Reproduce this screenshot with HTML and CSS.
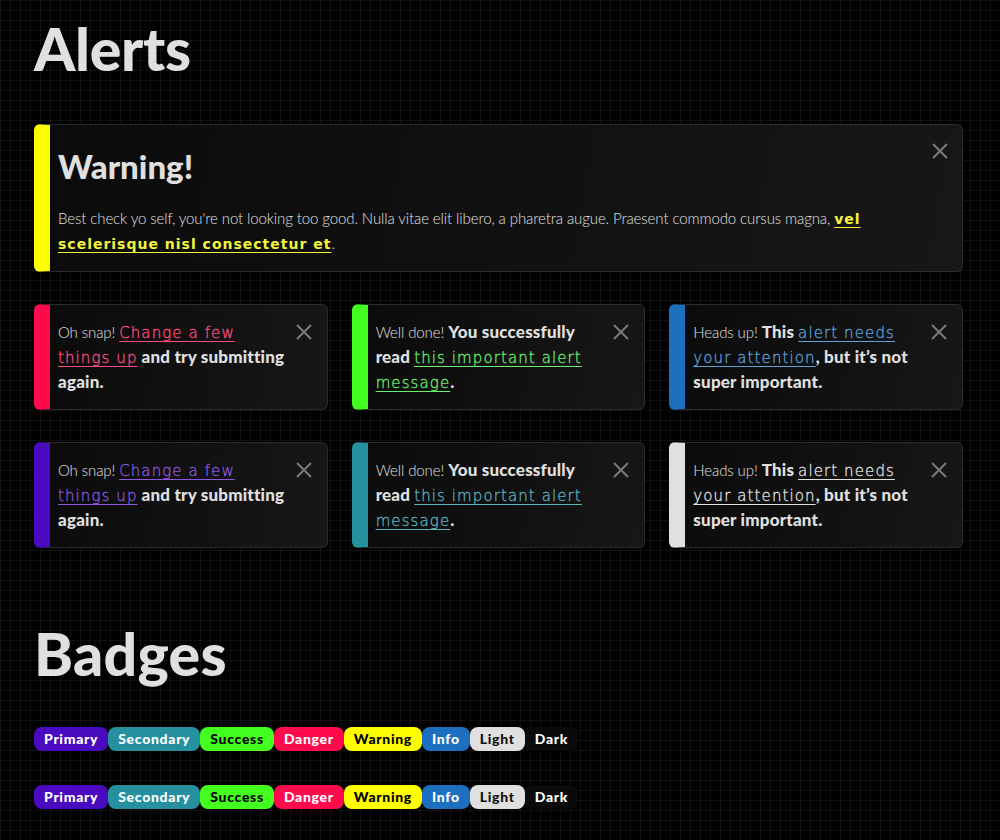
FILE: index.html
```html
<!DOCTYPE html>
<html lang="en">
<head>
    <meta charset="UTF-8">
    <meta name="viewport" content="width=device-width, initial-scale=1.0">
    <title>Alerts &amp; Badges</title>
    <link rel="stylesheet" href="styles.css">
</head>
<body>
    <div class="container">
        <h1 class="section-title">Alerts</h1>

        <div class="alert alert-warning">
            <div class="alert-body">
                <h4 class="alert-heading">Warning!</h4>
                <p>Best check yo self, you're not looking too good. Nulla vitae elit libero, a pharetra augue. Praesent commodo cursus magna, <a href="#" class="alert-link strong-link">vel scelerisque nisl consectetur et</a>.</p>
            </div>
            <button class="close" aria-label="Close">
                <svg viewBox="0 0 16 16"><path d="M1 1L15 15M15 1L1 15"/></svg>
            </button>
        </div>

        <div class="alert-grid">
            <div class="alert alert-danger">
                <div class="alert-body">Oh snap! <a href="#" class="alert-link">Change a few things up</a> <strong>and try submitting again.</strong></div>
                <button class="close" aria-label="Close"><svg viewBox="0 0 16 16"><path d="M1 1L15 15M15 1L1 15"/></svg></button>
            </div>
            <div class="alert alert-success">
                <div class="alert-body">Well done! <strong>You successfully read</strong> <a href="#" class="alert-link">this important alert message</a><strong>.</strong></div>
                <button class="close" aria-label="Close"><svg viewBox="0 0 16 16"><path d="M1 1L15 15M15 1L1 15"/></svg></button>
            </div>
            <div class="alert alert-info">
                <div class="alert-body">Heads up! <strong>This</strong> <a href="#" class="alert-link">alert needs your attention</a><strong>, but it’s not super important.</strong></div>
                <button class="close" aria-label="Close"><svg viewBox="0 0 16 16"><path d="M1 1L15 15M15 1L1 15"/></svg></button>
            </div>

            <div class="alert alert-primary">
                <div class="alert-body">Oh snap! <a href="#" class="alert-link">Change a few things up</a> <strong>and try submitting again.</strong></div>
                <button class="close" aria-label="Close"><svg viewBox="0 0 16 16"><path d="M1 1L15 15M15 1L1 15"/></svg></button>
            </div>
            <div class="alert alert-secondary">
                <div class="alert-body">Well done! <strong>You successfully read</strong> <a href="#" class="alert-link">this important alert message</a><strong>.</strong></div>
                <button class="close" aria-label="Close"><svg viewBox="0 0 16 16"><path d="M1 1L15 15M15 1L1 15"/></svg></button>
            </div>
            <div class="alert alert-light">
                <div class="alert-body">Heads up! <strong>This</strong> <a href="#" class="alert-link">alert needs your attention</a><strong>, but it’s not super important.</strong></div>
                <button class="close" aria-label="Close"><svg viewBox="0 0 16 16"><path d="M1 1L15 15M15 1L1 15"/></svg></button>
            </div>
        </div>

        <h1 class="section-title badges-title">Badges</h1>

        <div class="badge-row">
            <span class="badge badge-primary">Primary</span><span class="badge badge-secondary">Secondary</span><span class="badge badge-success">Success</span><span class="badge badge-danger">Danger</span><span class="badge badge-warning">Warning</span><span class="badge badge-info">Info</span><span class="badge badge-light">Light</span><span class="badge badge-dark">Dark</span>
        </div>

        <div class="badge-row">
            <a href="#" class="badge badge-primary">Primary</a><a href="#" class="badge badge-secondary">Secondary</a><a href="#" class="badge badge-success">Success</a><a href="#" class="badge badge-danger">Danger</a><a href="#" class="badge badge-warning">Warning</a><a href="#" class="badge badge-info">Info</a><a href="#" class="badge badge-light">Light</a><a href="#" class="badge badge-dark">Dark</a>
        </div>
    </div>
</body>
</html>
```

FILE: styles.css
```css
html {
    background-color: #000;
}
body {
    margin: 0;
    font-family: "Lato", "Noto Sans", sans-serif;
    color: #e0e0e0;
    background-color: #000;
    background-image:
        linear-gradient(rgba(255,255,255,0.06) 1px, transparent 1px),
        linear-gradient(90deg, rgba(255,255,255,0.06) 1px, transparent 1px);
    background-size: 10px 10px;
    min-height: 840px;
}
.container {
    width: 929px;
    margin-left: 34px;
    padding-top: 14px;
}
.section-title {
    font-size: 59px;
    font-weight: 900;
    line-height: 70px;
    margin: 0 0 40px;
    color: #e0e0e0;
    letter-spacing: -0.3px;
}
.badges-title {
    margin-top: 71px;
    margin-bottom: 38px;
    letter-spacing: 0.3px;
}

/* alerts */
.alert {
    display: flex;
    align-items: flex-start;
    gap: 8px;
    border: 1px solid #2c2c2c;
    border-left: 16px solid #888;
    border-radius: 6px;
    padding: 15px 15px 14px 8px;
    background: linear-gradient(100deg, #0b0b0b 0%, #121212 60%, #171717 100%);
    font-size: 15px;
    line-height: 25px;
    font-weight: 300;
    letter-spacing: -0.1px;
}
.alert-body {
    flex: 1;
}
.alert strong {
    font-size: 17px;
    line-height: 1;
    font-weight: 900;
    letter-spacing: 0.2px;
}
.alert p {
    margin: 20px 0 0;
}
.alert-heading {
    font-size: 33px;
    line-height: 40px;
    font-weight: 900;
    letter-spacing: 0;
    margin: 3px 0 0;
}
.alert-link {
    font-family: "DejaVu Sans", sans-serif;
    font-size: 15px;
    line-height: 1;
    letter-spacing: 1.1px;
    -webkit-text-stroke: 0.3px currentColor;
    text-decoration: underline;
    text-decoration-thickness: 1px;
    text-underline-offset: 3px;
}
.strong-link {
    font-weight: bold;
    font-size: 14px;
    letter-spacing: 1px;
    -webkit-text-stroke: 0;
}
.close {
    flex: none;
    width: 16px;
    height: 16px;
    margin-top: 4px;
    padding: 0;
    border: 0;
    background: none;
    cursor: pointer;
}
.close svg {
    display: block;
    width: 16px;
    height: 16px;
    stroke: #7a7a7a;
    stroke-width: 2;
    fill: none;
}
.alert-warning {
    border-left-color: #ffff00;
    margin-bottom: 32px;
    padding-top: 18px;
    padding-right: 14px;
    padding-bottom: 15px;
}
.alert-warning .close {
    margin-top: 0;
}
.alert-warning .alert-link { color: #f4f43a; }
.alert-grid {
    display: grid;
    grid-template-columns: repeat(3, 1fr);
    gap: 32px 24px;
}
.alert-danger { border-left-color: #ff0a4d; }
.alert-danger .alert-link { color: #ff4b83; }
.alert-success { border-left-color: #42ff1f; }
.alert-success .alert-link { color: #6cf06c; }
.alert-info { border-left-color: #1d6fbf; }
.alert-info .alert-link { color: #5ea3db; }
.alert-primary { border-left-color: #4a0bc0; }
.alert-primary .alert-link { color: #8d58de; }
.alert-secondary { border-left-color: #25919f; }
.alert-secondary .alert-link { color: #5cb4c0; }
.alert-light { border-left-color: #e0e0e0; }
.alert-light .alert-link { color: #e0e0e0; }

/* badges */
.badge-row {
    display: flex;
    margin-bottom: 34px;
}
.badge {
    display: inline-block;
    height: 24px;
    line-height: 24px;
    padding: 0 10px;
    border-radius: 8px;
    font-size: 14px;
    font-weight: 900;
    letter-spacing: 0.7px;
    text-decoration: none;
    color: #fff;
}
.badge-primary { background: #4a0bc0; }
.badge-secondary { background: #25919f; }
.badge-success { background: #42ff1f; color: #000; }
.badge-danger { background: #ff0a4d; }
.badge-warning { background: #ffff00; color: #000; }
.badge-info { background: #1d6fbf; }
.badge-light { background: #e0e0e0; color: #111; }
.badge-dark { background: #0a0a0a; }
```
